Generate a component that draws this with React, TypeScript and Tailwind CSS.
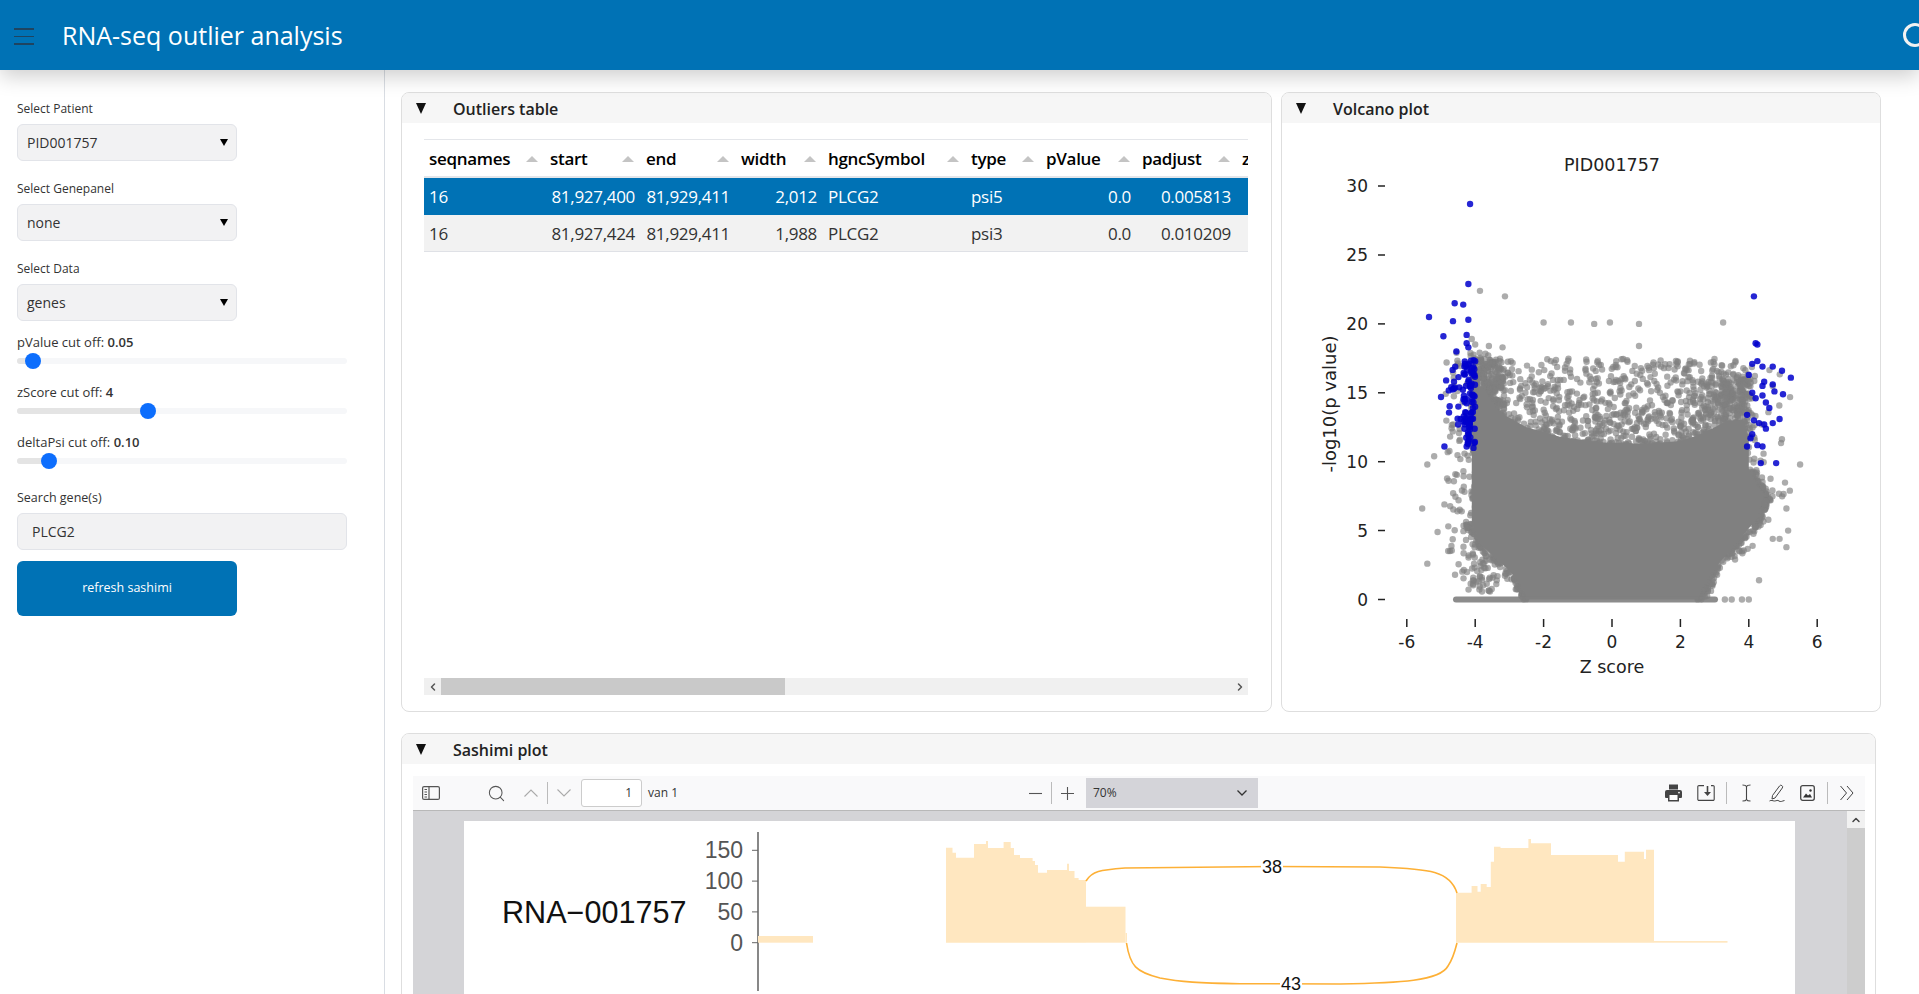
import { useMemo } from "react";
import { ChevronLeft, ChevronRight, ChevronUp, Search } from "lucide-react";

const columns = [
  { name: "seqnames", w: "w-[121px]" },
  { name: "start", w: "w-[96px]" },
  { name: "end", w: "w-[95px]" },
  { name: "width", w: "w-[87px]" },
  { name: "hgncSymbol", w: "w-[143px]" },
  { name: "type", w: "w-[75px]" },
  { name: "pValue", w: "w-[96px]" },
  { name: "padjust", w: "w-[100px]" },
];

const rows = [
  ["16", "81,927,400", "81,929,411", "2,012", "PLCG2", "psi5", "0.0", "0.005813"],
  ["16", "81,927,424", "81,929,411", "1,988", "PLCG2", "psi3", "0.0", "0.010209"],
];

const rightAligned = [false, true, true, true, false, false, true, true];

// outline of the solid part of the volcano, as [z score, -log10 p]
const MASS = [
  [-2.5, 0], [2.5, 0], [2.65, 0.8], [2.95, 2.1], [3.6, 4], [4.25, 5.9], [4.35, 6.8], [4.45, 7.6], [4.2, 8.4], [4, 9.5], [4, 11.5],
  [3.85, 13], [3.4, 13], [2.6, 12], [2, 11.5], [1, 11.3], [-0.3, 11.4], [-1.5, 11.8], [-2.5, 12.5], [-3.3, 13.6], [-3.8, 15.5],
  [-4.05, 15], [-4.1, 10], [-4.1, 5.6], [-3.85, 4], [-3, 2.1], [-2.6, 0.8],
];

function rng(seed: number) {
  let s = seed;
  return () => {
    s = (s * 1664525 + 1013904223) % 4294967296;
    return s / 4294967296;
  };
}

function zx(z: number) {
  return 1612 + z * 34.2 - 1282;
}
function py(p: number) {
  return 599.5 - p * 13.78 - 123;
}

function SelectBox({ label, value }: { label: string; value: string }) {
  return (
    <div className="mb-[20px]">
      <div className="text-[12px] leading-[16px] text-[#333] mb-[7px]">{label}</div>
      <div className="w-[220px] h-[37px] flex items-center justify-between pl-[9px] pr-[8px] bg-[#f2f2f3] border border-[#e2e4e9] rounded-md text-[14px] text-[#333]">
        <span>{value}</span>
        <span className="w-0 h-0 border-x-[4.5px] border-x-transparent border-t-[7px] border-t-black" />
      </div>
    </div>
  );
}

function Slider({ label, value, left }: { label: string; value: string; left: number }) {
  return (
    <div className="mb-[20px] w-[330px]">
      <div className="text-[13px] leading-[16px] text-[#333]">
        {label} <span className="font-semibold">{value}</span>
      </div>
      <div className="relative h-[6px] mt-[8px] bg-[#f6f7f9] rounded-full">
        <div className="h-[6px] bg-[#e4e4e4] rounded-full" style={{ width: left }} />
        <div className="absolute top-[-5px] w-4 h-4 rounded-full bg-[#0d6efd]" style={{ left: left - 8 }} />
      </div>
    </div>
  );
}

function Card({ title, className, children }: { title: string; className: string; children: React.ReactNode }) {
  return (
    <div className={"border border-[#dedede] rounded-lg overflow-hidden bg-white " + className}>
      <div className="h-[30px] bg-[#f6f6f6] flex items-center pl-[14px]">
        <span className="w-0 h-0 border-x-[5.5px] border-x-transparent border-t-[11px] border-t-[#111] mr-[27px]" />
        <span className="text-[16px] font-semibold text-[#222] mt-[1px]">{title}</span>
      </div>
      {children}
    </div>
  );
}

function Volcano() {
  const { gray, blue } = useMemo(() => {
    const r = rng(1757);
    const g: [number, number][] = [];
    // sparse cloud above the solid mass
    for (let i = 0; i < 1500; i++) {
      const z = -4.1 + r() * 8;
      const p = 10.5 + Math.pow(r(), 2.2) * 7;
      g.push([z, p]);
    }
    // denser shoulders next to the outlier columns
    for (let i = 0; i < 320; i++) g.push([-4.05 + r() * 0.9, 12 + r() * 5.5]);
    for (let i = 0; i < 160; i++) g.push([3.2 + r() * 0.85, 11.5 + r() * 4.5]);
    // left flank, thinning out towards the bottom
    for (let i = 0; i < 420; i++) {
      const p = 0.5 + r() * 17.5;
      const z = -4.9 + r() * 1.3 + (p < 4 ? (4 - p) * 0.12 : 0);
      if (z > -4.15 || r() < 0.35) g.push([z, p]);
    }
    // right flank
    for (let i = 0; i < 520; i++) {
      const z = 2.5 + r() * 2.8;
      const p = 1 + r() * 16;
      if (p < 8) {
        if (z < 2.7 + p * 0.3 + r() * 0.3 && r() < 0.7) g.push([z, p]);
      } else if (z < 4.2 || r() < 0.15) {
        g.push([z, p]);
      }
    }
    // roughen the lower edges of the mass
    MASS.forEach(([z0, p0], i) => {
      const [z1, p1] = MASS[(i + 1) % MASS.length];
      const lowerEdge = (i >= 1 && i <= 8) || i >= 23;
      if (!lowerEdge) return;
      for (let k = 0; k < 30; k++) {
        const t = r();
        const out = r() * r() * 0.3 * (z0 > 0 ? 1 : -1);
        g.push([z0 + (z1 - z0) * t + out, Math.max(0, p0 + (p1 - p0) * t)]);
      }
    });
    const extra: [number, number][] = [
      [-3.86, 22.4], [-3.13, 22], [-2, 20.1], [-1.2, 20.1], [-0.52, 20], [-0.06, 20.1], [0.79, 20],
      [3.25, 20.1], [0.79, 18.4], [-5.55, 6.6], [-5.4, 9.8], [-5.2, 10.4], [-5.4, 2.6], [5.5, 9.8],
      [5.2, 7.9], [5.1, 6.6], [5.15, 5], [5.1, 3.8], [4.3, 1.4], [-5.1, 4.9], [-4.9, 6.9], [4.9, 4.4], [4.7, 4.4],
      [3.8, 0], [4.0, 0], [3.5, 0], [3.3, 0], [-4.1, 18.9], [-4, 18.5], [-3.6, 18.4], [-3.2, 18.3],
    ];
    const b: [number, number][] = [
      [-4.15, 28.7], [-4.2, 22.9], [-4.6, 21.5], [-4.35, 21.4], [-5.35, 20.5], [-4.65, 20.2], [-4.2, 20.3],
      [-4.93, 19.1], [-4.25, 19.2], [-4.55, 18], [-4.25, 18.6], [-4.2, 18.3], [4.15, 22], [4.2, 18.6], [4.25, 18.5],
      [4.1, 17.1], [4.25, 17.3], [4.4, 16.9], [4.7, 16.9], [4.97, 16.6], [5.23, 16.1], [4.0, 16.3],
      [4.45, 15.8], [4.4, 15.5], [4.7, 15.6], [4.75, 15.1], [5, 14.9], [4.1, 15], [4.2, 14.6], [4.4, 14.8],
      [4.5, 14.3], [4.6, 13.9], [3.95, 13.4], [4.15, 13], [4.3, 12.8], [4.45, 12.7], [4.7, 12.8], [4.9, 13.1], [4.5, 12.4],
      [4.1, 12], [4.05, 11.7], [3.95, 11.1], [4.25, 11.2], [4.4, 11.1], [4.35, 9.9], [4.8, 9.9], [-5, 14.7], [-4.85, 15.9], [-4.7, 15.4],
      [-4.9, 11.1], [-4.5, 12.7], [-4.25, 11.1], [-4.05, 11],
    ];
    const rb = rng(42);
    for (let i = 0; i < 80; i++) b.push([-4.35 + rb() * 0.35, 11.2 + rb() * 6.2]);
    for (let i = 0; i < 16; i++) b.push([-4.8 + rb() * 0.5, 13 + rb() * 4]);
    return { gray: g.concat(extra), blue: b };
  }, []);

  const mass = MASS.map(([z, p]) => `${zx(z)},${py(p)}`).join(" ");

  const axisColor = "#222";
  return (
    <svg width="598" height="588" className="block" style={{ fontFamily: '"DejaVu Sans", sans-serif' }}>
      <text x={zx(0)} y={48} textAnchor="middle" fontSize="17.5" fill="#222">PID001757</text>
      {gray.map(([z, p], i) => (
        <circle key={i} cx={zx(z)} cy={py(p)} r="3.2" fill="#808080" opacity="0.65" />
      ))}
      <polygon points={mass} fill="#808080" />
      <rect x={zx(-4.65)} y={py(0) - 3} width={zx(3.1) - zx(-4.65)} height="6" rx="3" fill="#808080" opacity="0.9" />
      {blue.map(([z, p], i) => (
        <circle key={i} cx={zx(z)} cy={py(p)} r="3.2" fill="#0000cc" opacity="0.85" />
      ))}
      {[0, 5, 10, 15, 20, 25, 30].map((p) => (
        <g key={p}>
          <line x1="96" x2="103" y1={py(p)} y2={py(p)} stroke={axisColor} strokeWidth="1.5" />
          <text x="86" y={py(p) + 6} textAnchor="end" fontSize="17" fill={axisColor}>{p}</text>
        </g>
      ))}
      {[-6, -4, -2, 0, 2, 4, 6].map((z) => (
        <g key={z}>
          <line x1={zx(z)} x2={zx(z)} y1="496" y2="504" stroke={axisColor} strokeWidth="1.5" />
          <text x={zx(z)} y="525" textAnchor="middle" fontSize="17" fill={axisColor}>{z}</text>
        </g>
      ))}
      <text x={zx(0)} y="550" textAnchor="middle" fontSize="17.5" fill={axisColor}>Z score</text>
      <text transform="translate(54 281) rotate(-90)" textAnchor="middle" fontSize="18" fill={axisColor}>-log10(p value)</text>
    </svg>
  );
}

const BASE = 941.7;

function stepPath(steps: [number, number][], end: number) {
  let d = `M${steps[0][0]} ${BASE}`;
  steps.forEach(([x, y], i) => {
    const next = i + 1 < steps.length ? steps[i + 1][0] : end;
    d += ` L${x} ${y} L${next} ${y}`;
  });
  return d + ` L${end} ${BASE} Z`;
}

function Sashimi() {
  const left: [number, number][] = [
    [946, 846.7], [952.5, 851.7], [956, 856.7], [974, 843], [986, 840], [988, 847], [1003.6, 841], [1010.7, 847], [1014, 854],
    [1020, 857], [1032.6, 860], [1035, 864], [1038, 871.7], [1047, 869], [1067, 862.7], [1069, 870], [1074.5, 877], [1078.6, 879],
  ];
  const right: [number, number][] = [
    [1456, 891.7], [1471.6, 885], [1477.5, 890.7], [1480.7, 883], [1486.7, 886], [1490.8, 860.7], [1494, 845.7], [1500.5, 847],
    [1528.4, 838], [1531, 842.3], [1551, 854], [1618, 860.7], [1624.8, 850.7], [1644, 858], [1646, 848.7],
  ];
  const fill = "#ffe7c0";
  const arc = "#fdb036";

  return (
    <svg width="1331" height="174" viewBox="464 820 1331 174" className="block" style={{ fontFamily: '"Liberation Sans", sans-serif' }}>
      <text x={502} y={921.7} fontSize="30.6" fill="#111">RNA−001757</text>
      <line x1={758} x2={758} y1={831} y2={990} stroke="#555" strokeWidth="1.4" />
      {[150, 100, 50, 0].map((c) => {
        const y = BASE - (c / 50) * 30.8;
        return (
          <g key={c}>
            <line x1={752} x2={758} y1={y} y2={y} stroke="#666" strokeWidth="1" />
            <text x={743} y={y + 8} textAnchor="end" fontSize="23" fill="#555">{c}</text>
          </g>
        );
      })}
      <rect x={758} y={935} width={55} height={6.7} fill={fill} />
      <path d={stepPath(left, 1086)} fill={fill} />
      <rect x={1086} y={905.7} width={39.5} height={36} fill={fill} />
      <rect x={1125.5} y={932} width={1.5} height={9.7} fill={fill} />
      <path d={stepPath(right, 1654)} fill={fill} />
      <rect x={1654} y={940} width={73.5} height={1.7} fill={fill} />
      <path d="M1086 880 C1092 870 1100 869 1125 867 L1272 865.5 L1380 866 C1430 868 1450 870 1457 892" fill="none" stroke={arc} strokeWidth="1.6" />
      <path d="M1126.5 942 C1130 965 1136 971 1160 977 C1180 981 1200 982 1240 982.7 L1340 983 C1400 982 1440 980 1448 965 C1453 958 1455 950 1457 942" fill="none" stroke={arc} strokeWidth="1.6" />
      <rect x={1261} y={856} width={22} height={18} fill="#fff" />
      <text x={1272} y={872} textAnchor="middle" fontSize="18" fill="#111">38</text>
      <rect x={1280} y={973} width={22} height={18} fill="#fff" />
      <text x={1291} y={989} textAnchor="middle" fontSize="18" fill="#111">43</text>
    </svg>
  );
}

function Sep() {
  return <div className="w-px h-[22px] bg-[#bbb] shrink-0" />;
}

function ToolbarLeft() {
  return (
    <div className="w-[616px] shrink-0 flex items-center text-[#555]">
      <svg width="18" height="14" viewBox="0 0 18 14" fill="none" stroke="#555" strokeWidth="1.2" className="ml-[9px] shrink-0">
        <rect x="0.6" y="0.6" width="16.8" height="12.8" rx="1.5" />
        <path d="M7 0.6v12.8M2.5 3.5h2.5M2.5 6h2.5M2.5 8.5h2.5M2.5 11h2.5" />
      </svg>
      <Search size={19} strokeWidth={1.3} className="ml-[47px] shrink-0" />
      <svg width="14" height="8" viewBox="0 0 14 8" fill="none" stroke="#aaa" strokeWidth="1.1" className="ml-[18px] shrink-0"><path d="M0.5 7.5L7 1l6.5 6.5" /></svg>
      <div className="ml-[9px]"><Sep /></div>
      <svg width="14" height="8" viewBox="0 0 14 8" fill="none" stroke="#aaa" strokeWidth="1.1" className="ml-[9px] shrink-0"><path d="M0.5 0.5L7 7l6.5-6.5" /></svg>
      <div className="ml-[10px] w-[61px] h-[28px] shrink-0 bg-white border border-[#ccc] rounded-[3px] flex items-center justify-end pr-[9px] text-[12px] text-[#333]">1</div>
      <span className="ml-[6px] text-[12px] text-[#333]">van 1</span>
    </div>
  );
}

function ToolbarCenter() {
  return (
    <div className="flex items-center text-[#555]">
      <svg width="13" height="13" viewBox="0 0 13 13" stroke="#555" strokeWidth="1.1"><path d="M0 6.5h13" /></svg>
      <div className="ml-[9px]"><Sep /></div>
      <svg width="13" height="13" viewBox="0 0 13 13" stroke="#555" strokeWidth="1.1" className="ml-[9px]"><path d="M0 6.5h13M6.5 0v13" /></svg>
      <div className="ml-[12px] w-[172px] h-[30px] bg-[#d4d4d9] flex items-center justify-between pl-[7px] pr-[11px] text-[12px] text-[#333]">
        <span>70%</span>
        <svg width="10" height="6" viewBox="0 0 10 6" fill="none" stroke="#333" strokeWidth="1.3"><path d="M0.5 0.5L5 5l4.5-4.5" /></svg>
      </div>
    </div>
  );
}

function ToolbarRight() {
  return (
    <div className="ml-auto pr-[11px] flex items-center">
      <svg width="17" height="18" viewBox="0 0 17 18">
        <path fill="#444" d="M4 0.5h9v5H4zM2 6h13a2 2 0 0 1 2 2v5a1 1 0 0 1-1 1h-2v3.5H3V14H1a1 1 0 0 1-1-1V8a2 2 0 0 1 2-2z" />
        <rect x="4.5" y="11" width="8" height="5" fill="#fff" />
        <circle cx="14" cy="8.6" r="0.9" fill="#fff" />
      </svg>
      <svg width="18" height="16" viewBox="0 0 18 16" fill="none" stroke="#444" strokeWidth="1.1" className="ml-[15px]">
        <path d="M7 0.6H2a1.2 1.2 0 0 0-1.2 1.2v12.4a1.2 1.2 0 0 0 1.2 1.2h14a1.2 1.2 0 0 0 1.2-1.2V1.8A1.2 1.2 0 0 0 16 0.6h-2" />
        <path d="M10.5 1v7" strokeWidth="1.6" />
        <path d="M7 7h7l-3.5 4z" fill="#444" stroke="none" />
      </svg>
      <div className="ml-[11px]"><Sep /></div>
      <svg width="9" height="18" viewBox="0 0 9 18" fill="none" stroke="#444" strokeWidth="1.1" className="ml-[15px]">
        <path d="M0.5 1c2 0 3.4.4 4 1.6C5.1 1.4 6.5 1 8.5 1M4.5 2.6v12.8M0.5 17c2 0 3.4-.4 4-1.6.6 1.2 2 1.6 4 1.6" />
      </svg>
      <svg width="16" height="18" viewBox="0 0 16 18" fill="none" stroke="#444" strokeWidth="1" className="ml-[18px]">
        <path d="M3.5 11.5L10.5 2a1.6 1.6 0 0 1 2.8 2L6 14l-3 1z" />
        <path d="M0.5 17c2-1.4 3 0 5 0s3-1.4 4.5 0 3 0 5.5-.5" />
      </svg>
      <svg width="15" height="16" viewBox="0 0 15 16" fill="none" stroke="#444" strokeWidth="1.3" className="ml-[15px]">
        <rect x="0.7" y="0.7" width="13.6" height="14.6" rx="2" />
        <path d="M3 12.5l3-4 2 2 2-1.5 2 3.5z" fill="#333" stroke="none" />
        <circle cx="10.5" cy="5.5" r="1.2" fill="#333" stroke="none" />
      </svg>
      <div className="ml-[12px]"><Sep /></div>
      <svg width="14" height="16" viewBox="0 0 14 16" fill="none" stroke="#444" strokeWidth="1" className="ml-[12px]">
        <path d="M0.5 1l6 7-6 7M7 1l6 7-6 7" />
      </svg>
    </div>
  );
}

export default function App() {
  return (
    <div className="h-screen w-full overflow-hidden bg-white flex flex-col" style={{ fontFamily: '"Open Sans", sans-serif' }}>
      <header className="relative z-10 h-[70px] shrink-0 bg-[#0072b5] flex items-center shadow-[0_6px_20px_rgba(0,0,0,0.2)]">
        <div className="ml-[14px] mt-[3px] w-[20px] flex flex-col gap-[6px]">
          <div className="h-[1.5px] bg-[#1f4460]" />
          <div className="h-[1.5px] bg-[#1f4460]" />
          <div className="h-[1.5px] bg-[#1f4460]" />
        </div>
        <div className="ml-[28px] mt-[1px] text-[25px] text-white">RNA-seq outlier analysis</div>
        <div className="ml-auto mr-[-8px] w-[24px] h-[24px] rounded-full border-[3px] border-[#f2f2f2]" />
      </header>

      <div className="flex flex-1 min-h-0">
        <aside className="w-[385px] shrink-0 border-r border-[#d9dde3] pl-[17px] pt-[31px]">
          <SelectBox label="Select Patient" value="PID001757" />
          <SelectBox label="Select Genepanel" value="none" />
          <SelectBox label="Select Data" value="genes" />
          <div className="-mt-[7px]">
            <Slider label="pValue cut off:" value="0.05" left={16} />
            <Slider label="zScore cut off:" value="4" left={131} />
            <Slider label="deltaPsi cut off:" value="0.10" left={32} />
          </div>
          <div className="text-[12.5px] leading-[16px] text-[#333] mt-[26px] mb-[7px]">Search gene(s)</div>
          <div className="w-[330px] h-[37px] flex items-center pl-[14px] bg-[#f2f2f3] border border-[#e2e4e9] rounded-md text-[14px] text-[#333]">PLCG2</div>
          <div className="w-[220px] h-[55px] mt-[11px] flex items-center justify-center bg-[#0072b5] rounded-md text-[12.5px] text-white">refresh sashimi</div>
        </aside>

        <main className="flex-1 min-w-0 pl-[16px] pt-[22px] overflow-hidden">
          <div className="flex gap-[9px]">
            <Card title="Outliers table" className="w-[871px] h-[620px]">
              <div className="ml-[22px] w-[824px] mt-[16px] border-t border-[#e4e6ea] overflow-hidden">
                <div className="flex h-[38px] pt-[1px] items-center border-b-2 border-[#e4e6ea] text-[17px] font-semibold text-black whitespace-nowrap tracking-[-0.3px]">
                  {columns.map((c) => (
                    <div key={c.name} className={c.w + " shrink-0 pl-[5px] pr-[7px] flex items-center justify-between"}>
                      <span>{c.name}</span>
                      <span className="w-0 h-0 border-x-[6px] border-x-transparent border-b-[6px] border-b-[#c4c4c4]" />
                    </div>
                  ))}
                  <div className="shrink-0 pl-[5px]">z</div>
                </div>
                {rows.map((row, i) => (
                  <div key={i} className={"flex h-[37px] pt-[1px] items-center text-[17px] whitespace-nowrap tracking-[-0.3px] " + (i === 0 ? "bg-[#0072b5] text-white" : "bg-[#f2f2f2] text-[#333] border-b border-[#dfe1e6]")}>
                    {row.map((v, j) => (
                      <div key={j} className={columns[j].w + " shrink-0 pl-[5px] pr-[6px] " + (rightAligned[j] ? "text-right" : "")}>{v}</div>
                    ))}
                  </div>
                ))}
              </div>
              <div className="ml-[22px] w-[824px] h-[17px] mt-[426px] flex items-center bg-[#f0f0f0] text-[#555]">
                <div className="w-[17px] flex justify-center"><ChevronLeft size={12} strokeWidth={3} /></div>
                <div className="w-[344px] h-[17px] bg-[#c9c9c9]" />
                <div className="flex-1" />
                <div className="w-[17px] flex justify-center"><ChevronRight size={12} strokeWidth={3} /></div>
              </div>
            </Card>
            <Card title="Volcano plot" className="w-[600px] h-[620px]">
              <Volcano />
            </Card>
          </div>

          <Card title="Sashimi plot" className="w-[1475px] h-[300px] mt-[21px]">
            <div className="ml-[11px] mt-[12px] w-[1452px]">
              <div className="h-[35px] bg-[#f9f9fa] border-b border-[#b8b8b8] flex items-center">
                <ToolbarLeft />
                <ToolbarCenter />
                <ToolbarRight />
              </div>
              <div className="flex h-[230px] bg-[#d4d4d7]">
                <div className="flex-1 pt-[10px] pl-[51px] overflow-hidden">
                  <div className="w-[1331px] h-[220px] bg-white overflow-hidden">
                    <Sashimi />
                  </div>
                </div>
                <div className="w-[18px] bg-[#cdcdcd]">
                  <div className="h-[17px] bg-[#f1f1f1] flex items-center justify-center text-[#444]"><ChevronUp size={12} strokeWidth={3} /></div>
                </div>
              </div>
            </div>
          </Card>
        </main>
      </div>
    </div>
  );
}
